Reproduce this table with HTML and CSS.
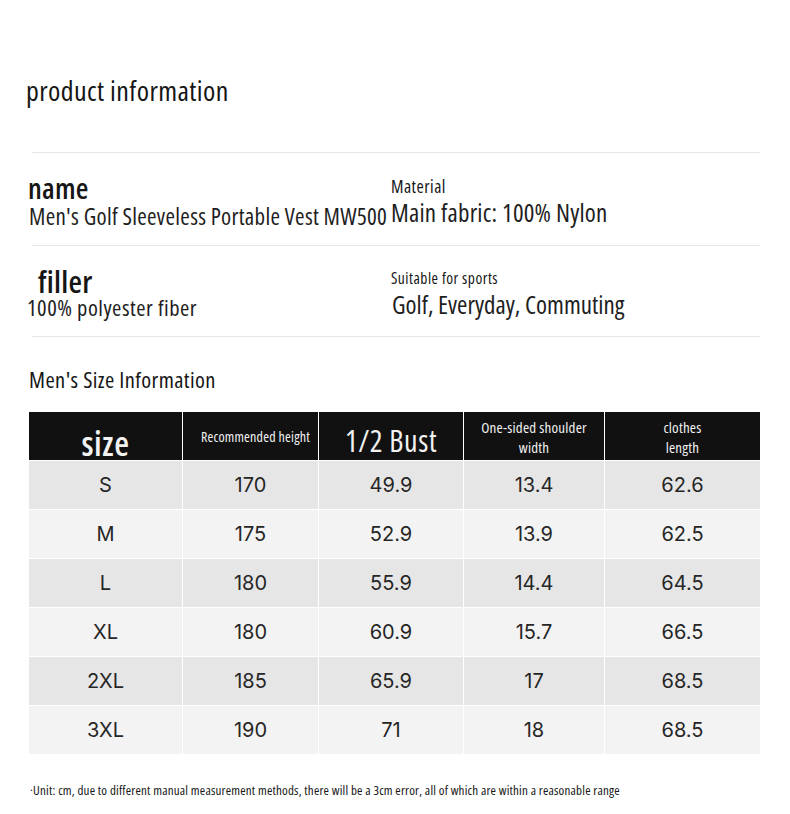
FILE: index.html
```html
<!DOCTYPE html>
<html>
<head>
<meta charset="utf-8">
<link rel="stylesheet" href="styles.css">
</head>
<body>
<div class="page">
  <h1 class="title">product information</h1>
  <div class="info">
    <div class="info-row row-1">
      <div class="cell cell-left">
        <div class="label-name">name</div>
        <div class="value-name">Men's Golf Sleeveless Portable Vest MW500</div>
      </div>
      <div class="cell cell-right">
        <div class="label-material">Material</div>
        <div class="value-big value-fabric">Main fabric: 100% Nylon</div>
      </div>
    </div>
    <div class="info-row row-2">
      <div class="cell cell-left cell-left-2">
        <div class="label-filler">filler</div>
        <div class="value-filler">100% polyester fiber</div>
      </div>
      <div class="cell cell-right cell-right-2">
        <div class="label-sports">Suitable for sports</div>
        <div class="value-big value-sports">Golf, Everyday, Commuting</div>
      </div>
    </div>
  </div>
  <h2 class="subtitle">Men's Size Information</h2>
  <div class="table">
    <div class="th th-size">size</div>
    <div class="th th-small th-height">Recommended height</div>
    <div class="th th-bust">1/2 Bust</div>
    <div class="th th-two">One-sided shoulder<br>width</div>
    <div class="th th-two">clothes<br>length</div>

    <div class="td odd">S</div><div class="td odd">170</div><div class="td odd">49.9</div><div class="td odd">13.4</div><div class="td odd">62.6</div>
    <div class="td even">M</div><div class="td even">175</div><div class="td even">52.9</div><div class="td even">13.9</div><div class="td even">62.5</div>
    <div class="td odd">L</div><div class="td odd">180</div><div class="td odd">55.9</div><div class="td odd">14.4</div><div class="td odd">64.5</div>
    <div class="td even">XL</div><div class="td even">180</div><div class="td even">60.9</div><div class="td even">15.7</div><div class="td even">66.5</div>
    <div class="td odd">2XL</div><div class="td odd">185</div><div class="td odd">65.9</div><div class="td odd">17</div><div class="td odd">68.5</div>
    <div class="td even">3XL</div><div class="td even">190</div><div class="td even">71</div><div class="td even">18</div><div class="td even">68.5</div>
  </div>
  <p class="note">·Unit: cm, due to different manual measurement methods, there will be a 3cm error, all of which are within a reasonable range</p>
</div>
</body>
</html>
```

FILE: styles.css
```css
* { box-sizing: border-box; }
html, body { margin: 0; padding: 0; background: #ffffff; }
body {
  font-family: "Open Sans", "DejaVu Sans", sans-serif;
  font-stretch: 75%;
  font-weight: 500;
  color: #161616;
}
.page {
  width: 790px;
  height: 814px;
  padding: 73px 30px 0 26px;
}
.title {
  margin: 0;
  font-size: 28px;
  font-weight: 500;
  line-height: 34px;
  letter-spacing: 0.4px;
  color: #161616;
}
.info {
  margin-top: 45px;
  margin-left: 6px;
  width: 728px;
}
.info-row {
  display: grid;
  grid-template-columns: 359px 1fr;
  border-top: 1px solid #e6e6e6;
}
.row-1 { height: 93px; }
.row-2 { height: 92px; border-bottom: 1px solid #e6e6e6; }
.cell {
  display: flex;
  flex-direction: column;
  white-space: nowrap;
}
.cell-left { margin-left: -4px; padding-top: 20px; }
.cell-right { padding-top: 22px; }
.cell-left-2 { padding-top: 20px; }
.cell-right-2 { padding-top: 22px; }

.label-name {
  font-size: 29px;
  line-height: 30px;
  font-weight: 600;
  letter-spacing: 0.2px;
}
.value-name {
  font-size: 23px;
  line-height: 26px;
  letter-spacing: 0.3px;
  margin-left: 1px;
  color: #1e1e1e;
}
.label-material {
  font-size: 17.5px;
  line-height: 22px;
  letter-spacing: 0.5px;
}
.value-big {
  font-size: 25px;
  line-height: 30px;
  color: #1e1e1e;
}
.value-fabric { letter-spacing: 0.2px; }
.value-sports { margin-left: 1px; margin-top: 1px; }
.label-filler {
  font-size: 31px;
  line-height: 30px;
  font-weight: 600;
  letter-spacing: 0.3px;
  margin-left: 10px;
}
.value-filler {
  font-size: 22.5px;
  line-height: 24px;
  letter-spacing: 0.5px;
  margin-left: -1px;
  color: #1e1e1e;
}
.label-sports {
  font-size: 15.5px;
  line-height: 20px;
  letter-spacing: 0.5px;
}

.subtitle {
  margin: 29px 0 0 3px;
  font-size: 22.5px;
  font-weight: 500;
  line-height: 28px;
  letter-spacing: 0.4px;
  color: #161616;
}
.table {
  margin: 18px 0 0 3px;
  width: 731px;
  display: grid;
  grid-template-columns: 153px 135px 144px 140px 155px;
  grid-auto-rows: 48px;
  gap: 1px;
  background: #ffffff;
}
.th {
  background: #111111;
  color: #f2f2f2;
  display: flex;
  align-items: center;
  justify-content: center;
  text-align: center;
  white-space: nowrap;
}
.th-size {
  font-size: 34px;
  font-weight: 600;
  line-height: 34px;
  letter-spacing: 0.6px;
  padding-top: 13px;
}
.th-small { font-size: 14px; letter-spacing: 0.2px; }
.th-height { padding-left: 10px; }
.th-bust {
  font-size: 30px;
  line-height: 34px;
  letter-spacing: 0.6px;
  padding-top: 9px;
}
.th-two {
  font-size: 15px;
  line-height: 20px;
  letter-spacing: 0.2px;
  padding-top: 1px;
}
.td {
  display: flex;
  align-items: center;
  justify-content: center;
  font-family: Inter, "Open Sans", sans-serif;
  font-stretch: normal;
  font-weight: 400;
  font-size: 20px;
  color: #262626;
}
.odd { background: #e6e6e6; }
.even { background: #f3f3f3; }
.note {
  margin: 28px 0 0 4px;
  font-size: 13px;
  line-height: 16px;
  letter-spacing: 0.2px;
  color: #161616;
}
```
